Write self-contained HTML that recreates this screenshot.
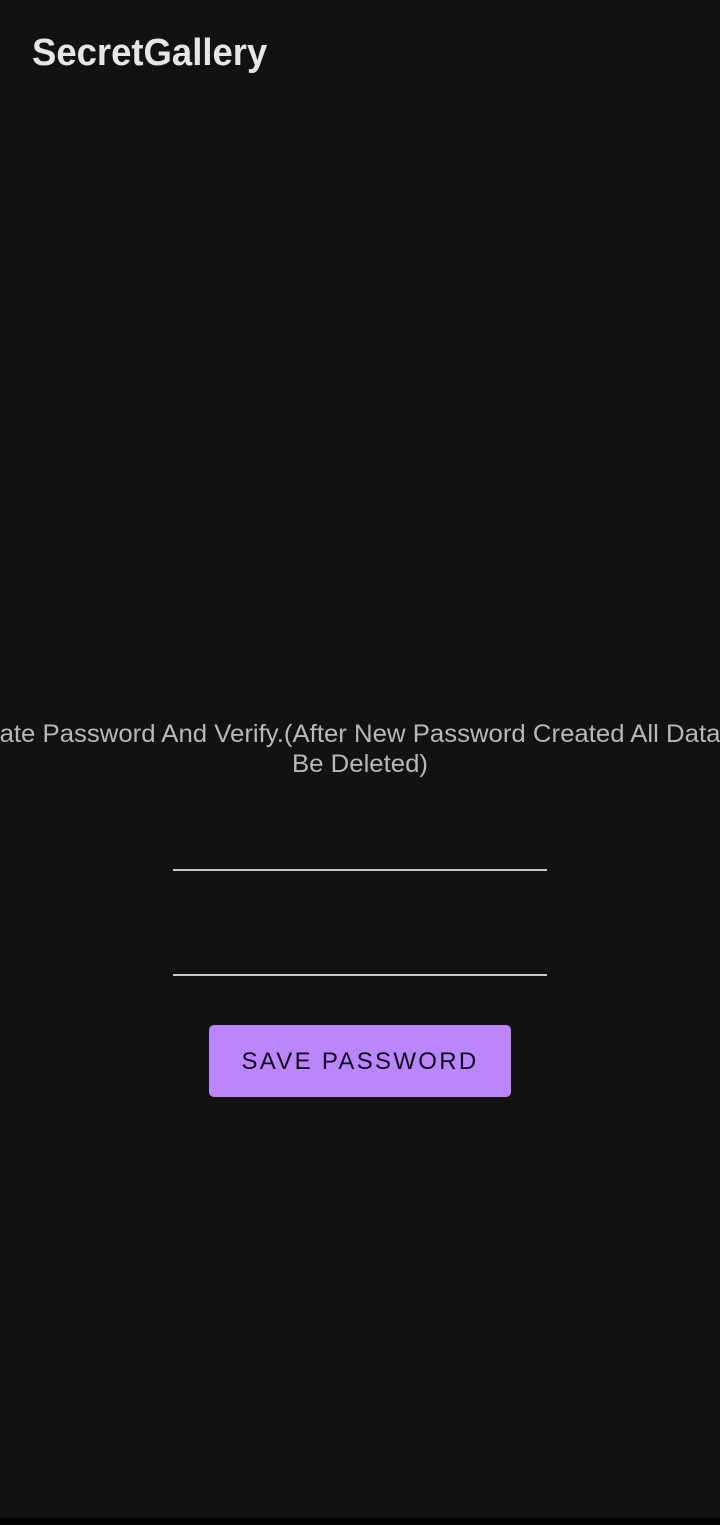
<!DOCTYPE html>
<html><head><style>
html,body{margin:0;padding:0;}
body{width:720px;height:1525px;background:#121212;position:relative;overflow:hidden;font-family:"Liberation Sans",sans-serif;}
.title{position:absolute;left:32px;top:32px;font-size:38px;color:#e6e6e6;font-weight:bold;transform:scaleX(0.96);transform-origin:left;}
.l1{position:absolute;left:-200px;width:1120px;top:720px;text-align:center;white-space:nowrap;font-size:25px;color:#b8b8b8;transform:scaleX(1.03);}
.l2{position:absolute;left:0;width:720px;top:750px;text-align:center;font-size:25px;color:#b8b8b8;transform:scaleX(1.03);}
.line{position:absolute;left:173px;width:374px;height:2px;background:#c8c8c8;}
.btn{position:absolute;left:209px;top:1025px;width:302px;height:72px;background:#bb86fc;border-radius:5px;color:#12051f;font-size:24px;letter-spacing:2.3px;text-align:center;line-height:74px;}
.bar{position:absolute;left:0;top:1518px;width:720px;height:7px;background:#000;}
</style></head><body>
<div class="title">SecretGallery</div>
<div class="l1">ate Password And Verify.(After New Password Created All Data</div>
<div class="l2">Be Deleted)</div>
<div class="line" style="top:869px"></div>
<div class="line" style="top:974px"></div>
<div class="btn">SAVE PASSWORD</div>
<div class="bar"></div>
</body></html>
